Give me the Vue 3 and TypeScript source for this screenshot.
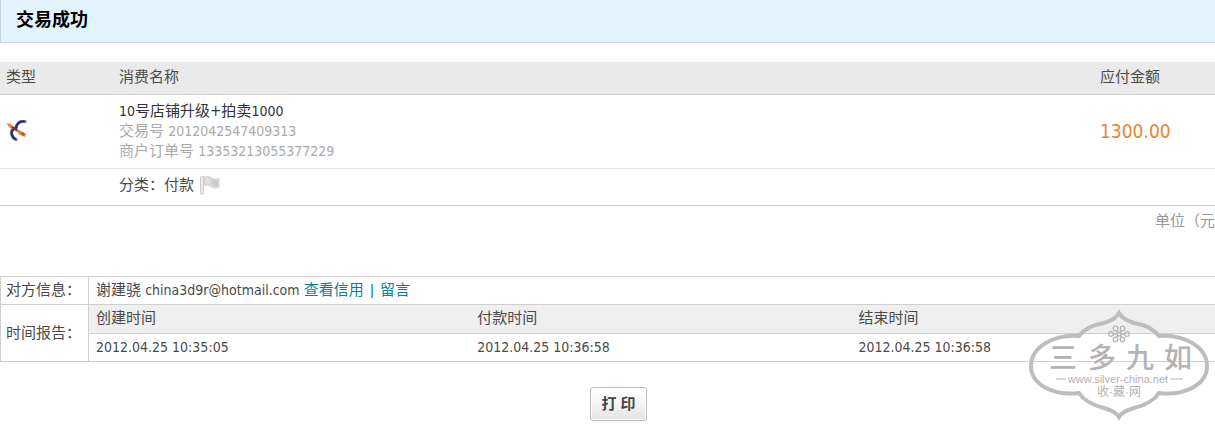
<script setup lang="ts">
interface TimeEntry {
  label: string
  value: string
}

const times: TimeEntry[] = [
  { label: '创建时间', value: '2012.04.25 10:35:05' },
  { label: '付款时间', value: '2012.04.25 10:36:58' },
  { label: '结束时间', value: '2012.04.25 10:36:58' },
]

function printPage(): void {
  window.print()
}
</script>

<template>
  <main class="page">
    <header class="banner">
      <h1>交易成功</h1>
    </header>

    <table class="orders">
      <thead>
        <tr>
          <th class="type">类型</th>
          <th>消费名称</th>
          <th class="amount">应付金额</th>
        </tr>
      </thead>
      <tbody>
        <tr class="item">
          <td>
            <svg class="logo" viewBox="0 0 22 22" aria-hidden="true">
              <path d="M1 3L5 4 7 7 13 10 17 12 20 14 19 17 14 15 11 12 4 8 2 6Z" fill="#d98a50" />
              <path d="M19 1.500C14 0.500 10.500 3 10 8C6 8 4.500 12 6 15C7 18 8 19 10 19.500" fill="none" stroke="#8085ad" stroke-width="3.200" stroke-linecap="round" />
              <path d="M18 1.500C14 1 10.500 4 10 8C6.500 9 5 12 6 15C7 17.500 8 18.500 9.500 19" fill="none" stroke="#272d68" stroke-width="2.200" stroke-linecap="round" />
              <path d="M6 6.500L11 10.500" stroke="#7a3c3c" stroke-width="2" />
              <path d="M15.500 13L18.500 15" stroke="#bd5c2a" stroke-width="2.500" />
            </svg>
          </td>
          <td>
            <p class="title"><span class="latin">10</span>号店铺升级<span class="plus">+</span>拍卖<span class="latin">1000</span></p>
            <p class="ref">交易号 <span class="latin">2012042547409313</span></p>
            <p class="ref">商户订单号 <span class="latin">13353213055377229</span></p>
          </td>
          <td class="price">1300.00</td>
        </tr>
        <tr class="category">
          <td></td>
          <td>
            <div class="tagline">
              <span>分类：付款</span>
              <svg class="flag" viewBox="0 0 20 20" aria-hidden="true">
                <path d="M0.500 2L3.500 1V18.500L0.500 19Z" fill="#ececec" stroke="#cfcfcf" />
                <path d="M4 1.500Q9 0 12 2.500Q15 5 19.500 2.500V12Q15 15 11 12Q8 9.500 4 11Z" fill="#d6d6d6" />
                <path d="M5 3Q8 2 10 3.500V9Q8 8 5 9Z" fill="#e0e0e0" />
                <path d="M12 5Q15 6.500 18 5V10Q15 12 12 9.500Z" fill="#cacaca" />
              </svg>
            </div>
          </td>
          <td></td>
        </tr>
      </tbody>
    </table>
    <p class="unit">单位（元</p>

    <table class="details">
      <colgroup>
        <col class="label-col" />
        <col class="time-col" />
        <col class="time-col" />
        <col />
      </colgroup>
      <tbody>
        <tr>
          <th scope="row">对方信息：</th>
          <td colspan="3">谢建骁 <span class="latin">china3d9r@hotmail.com</span> <a href="#credit">查看信用</a> <span class="bar">|</span> <a href="#message">留言</a></td>
        </tr>
        <tr class="shaded">
          <th scope="rowgroup" rowspan="2">时间报告：</th>
          <td v-for="entry in times" :key="entry.label">{{ entry.label }}</td>
        </tr>
        <tr>
          <td v-for="entry in times" :key="entry.label" class="latin">{{ entry.value }}</td>
        </tr>
      </tbody>
    </table>

    <div class="actions">
      <button type="button" @click="printPage">打 印</button>
    </div>

    <svg class="seal" viewBox="0 0 182 112" role="img" aria-label="三多九如">
      <path
        d="M90 4C93 9 98 12 105 14C117 16 125 20 130 27C155 25 178 38 178 57C178 76 155 87 130 84C125 92 117 96 105 99C98 101 93 103 90 108C87 103 82 101 75 99C63 96 55 92 50 84C25 87 2 76 2 57C2 38 25 25 50 27C55 20 63 16 75 14C82 12 87 9 90 4Z"
        fill="none" stroke="#bdbdbd" stroke-width="4"
      />
      <g fill="none" stroke="#b5b5b5" stroke-width="1.300">
        <circle cx="90" cy="25" r="2" />
        <circle cx="86.500" cy="19.500" r="2.300" />
        <circle cx="93.500" cy="19.500" r="2.300" />
        <circle cx="82" cy="25" r="2.300" />
        <circle cx="98" cy="25" r="2.300" />
        <circle cx="86.500" cy="30.500" r="2.300" />
        <circle cx="93.500" cy="30.500" r="2.300" />
        <path d="M84 25H88M92 25H96M87.500 22L89 24M92.500 22L91 24M87.500 28L89 26M92.500 28L91 26" />
      </g>
      <path d="M27 70H37M141 70H154" stroke="#b3b3b3" />
      <g fill="#b3b3b3" text-anchor="middle">
        <g class="seal-name">
          <text x="34" y="59">三</text>
          <text x="73" y="59">多</text>
          <text x="111" y="59">九</text>
          <text x="149" y="59">如</text>
        </g>
        <text class="seal-url" x="89" y="74">www.silver-china.net</text>
        <text class="seal-sub" x="90" y="87">收·藏·网</text>
      </g>
    </svg>
  </main>
</template>

<style>
body {
  margin: 0;
  background: #fff;
}
</style>

<style scoped>
.page {
  position: relative;
  overflow: hidden;
  color: #4a4a4a;
  font: 15px/20px "Liberation Sans", "Noto Sans CJK SC", sans-serif;
}
h1,
p {
  margin: 0;
}
.latin {
  font-family: "DejaVu Sans Condensed", "Noto Sans", "Noto Sans CJK SC", sans-serif;
  font-size: 14px;
}
.plus {
  font-family: "DejaVu Sans Condensed", "Noto Sans", sans-serif;
}
.banner {
  padding: 10px 15px 12px;
  background: #e3f4ff;
  border-bottom: 1px solid #c4d3de;
  border-left: 1px solid #c4d3de;
}
h1 {
  color: #000;
  font-size: 18px;
  line-height: 20px;
}
table {
  width: 100%;
  border-collapse: separate;
  border-spacing: 0;
  table-layout: fixed;
}
th {
  font-weight: normal;
  text-align: left;
}
.orders {
  margin-top: 19px;
}
.orders th {
  padding: 5px 6px 7px;
  background: #eaeaea;
  border-bottom: 1px solid #cfcfcf;
}
.orders .type {
  width: 101px;
}
.orders .amount {
  width: 109px;
}
.orders td {
  padding: 0 6px;
}
.item td {
  padding-top: 6px;
  padding-bottom: 7px;
  border-bottom: 1px solid #e6e6e6;
}
.item .price {
  color: #e6862f;
  font-family: "DejaVu Sans Condensed", "Noto Sans", sans-serif;
  font-size: 19px;
}
.logo {
  display: block;
  width: 22px;
  height: 22px;
}
.title {
  color: #333;
}
.ref {
  color: #aaa;
}
.category td {
  padding-top: 6px;
  padding-bottom: 10px;
  border-bottom: 1px solid #cfcfcf;
}
.tagline {
  display: flex;
  align-items: center;
  gap: 6px;
}
.flag {
  width: 20px;
  height: 20px;
}
.unit {
  padding-top: 5px;
  color: #999;
  text-align: right;
}
.details {
  margin-top: 45px;
  border-top: 1px solid #cfcfcf;
  border-left: 1px solid #cfcfcf;
}
.label-col {
  width: 88px;
}
.time-col {
  width: 31.4%;
}
.details th,
.details td {
  padding: 3px 7px 4px;
  border-bottom: 1px solid #cfcfcf;
}
.details th {
  padding-left: 5px;
  padding-right: 0;
  border-right: 1px solid #cfcfcf;
}
.details .shaded td {
  padding-bottom: 5px;
  background: #efefef;
}
a,
.bar {
  color: #087f96;
  text-decoration: none;
}
.bar {
  padding: 0 2px;
}
.actions {
  display: flex;
  justify-content: center;
  padding: 25px 0 4px 22px;
}
button {
  padding: 6px 10px;
  color: #444;
  background: linear-gradient(#fff, #f4f4f4 50%, #e2e2e2);
  border: 1px solid #bcbcbc;
  border-radius: 3px;
  box-shadow: inset 0 0 0 1px #fff;
  font: bold 15px/20px "Liberation Sans", "Noto Sans CJK SC", sans-serif;
}
.seal {
  position: absolute;
  right: 4px;
  bottom: 4px;
  width: 182px;
  height: 112px;
}
.seal-name {
  font: 500 28px "Liberation Sans", "Noto Sans CJK SC", sans-serif;
}
.seal-url {
  font: 11px "Liberation Sans", sans-serif;
}
.seal-sub {
  font: 12px "Liberation Sans", "Noto Sans CJK SC", sans-serif;
}
</style>
